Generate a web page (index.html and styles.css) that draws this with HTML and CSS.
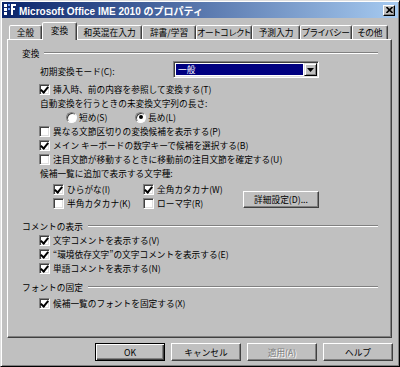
FILE: index.html
```html
<!DOCTYPE html>
<html lang="ja">
<head>
    <meta charset="UTF-8">
    <title>Microsoft Office IME 2010 のプロパティ</title>
    <link rel="stylesheet" href="styles.css">
</head>
<body>
<div class="window">
    <div class="titlebar">
        <svg class="app-icon" width="12" height="12" viewBox="0 0 12 12">
            <rect x="0" y="0" width="3" height="3" fill="#fff"/>
            <rect x="0" y="4" width="3" height="3" fill="#fff"/>
            <rect x="0" y="8" width="3" height="3" fill="#fff"/>
            <rect x="4" y="0" width="2" height="2" fill="#6fa0ff"/>
            <rect x="4" y="4" width="2" height="2" fill="#6fa0ff"/>
            <path d="M7 0 H12 V2 H9 V4 H11 V6 H9 V11 H7 Z" fill="#fff"/>
        </svg>
        <span class="title">Microsoft Office IME 2010 のプロパティ</span>
        <span class="close">
            <svg width="7" height="6" viewBox="0 0 7 6"><path d="M0.5 0 L6.5 6 M6.5 0 L0.5 6" stroke="#000" stroke-width="1.6"/></svg>
        </span>
    </div>

    <div class="tabs">
        <div class="tab tab-general">全般</div>
        <div class="tab tab-convert active">変換</div>
        <div class="tab tab-mixed">和英混在入力</div>
        <div class="tab tab-dict">辞書/学習</div>
        <div class="tab tab-auto">オートコレクト</div>
        <div class="tab tab-predict">予測入力</div>
        <div class="tab tab-privacy">プライバシー</div>
        <div class="tab tab-other">その他</div>
    </div>

    <div class="panel">
        <!-- 変換 -->
        <div class="group-head first">変換</div>
        <div class="group-body">
            <div class="select-row">
                <span class="select-label">初期変換モード(C):</span>
                <div class="select">
                    <span class="select-value">一般</span>
                    <span class="select-arrow">
                        <svg width="7" height="4" viewBox="0 0 7 4"><path d="M0 0 H7 L3.5 4 Z" fill="#000"/></svg>
                    </span>
                </div>
            </div>
            <label class="check"><span class="box checked"></span>挿入時、前の内容を参照して変換する(T)</label>
            <div class="text-row">自動変換を行うときの未変換文字列の長さ:</div>
            <div class="radios">
                <label class="radio short"><span class="dot"></span>短め(S)</label>
                <label class="radio"><span class="dot selected"></span>長め(L)</label>
            </div>
            <label class="check"><span class="box"></span>異なる文節区切りの変換候補を表示する(P)</label>
            <label class="check"><span class="box checked"></span>メイン キーボードの数字キーで候補を選択する(B)</label>
            <label class="check"><span class="box"></span>注目文節が移動するときに移動前の注目文節を確定する(U)</label>
            <div class="text-row">候補一覧に追加で表示する文字種:</div>
            <div class="extra">
                <div class="extra-grid">
                    <label class="check"><span class="box checked"></span>ひらがな(I)</label>
                    <label class="check"><span class="box checked"></span>全角カタカナ(W)</label>
                    <label class="check"><span class="box"></span>半角カタカナ(K)</label>
                    <label class="check"><span class="box"></span>ローマ字(R)</label>
                </div>
                <button class="btn btn-detail">詳細設定(D)...</button>
            </div>
        </div>

        <!-- コメントの表示 -->
        <div class="group-head comment">コメントの表示</div>
        <div class="group-body">
            <label class="check"><span class="box checked"></span>文字コメントを表示する(V)</label>
            <label class="check"><span class="box checked"></span>“環境依存文字”の文字コメントを表示する(E)</label>
            <label class="check"><span class="box checked"></span>単語コメントを表示する(N)</label>
        </div>

        <!-- フォントの固定 -->
        <div class="group-head font">フォントの固定</div>
        <div class="group-body font-body">
            <label class="check"><span class="box checked"></span>候補一覧のフォントを固定する(X)</label>
        </div>
    </div>

    <div class="buttons">
        <button class="btn default">OK</button>
        <button class="btn">キャンセル</button>
        <button class="btn disabled">適用(A)</button>
        <button class="btn">ヘルプ</button>
    </div>
</div>
</body>
</html>
```

FILE: styles.css
```css
:root {
    --face: #c0c0c0;
    --light: #ffffff;
    --shadow: #808080;
    --dark: #404040;
}

body {
    margin: 0;
    background: var(--face);
    font-family: "Noto Sans CJK JP", sans-serif;
    font-size: 8.7px;
    color: #000;
    overflow: hidden;
}

.window {
    width: 400px;
    height: 367px;
    box-sizing: border-box;
    background: var(--face);
    border: 1px solid;
    border-color: #dfdfdf #000 #000 #dfdfdf;
    box-shadow: inset 1px 1px var(--light), inset -1px -1px var(--shadow);
    padding: 1px;
    display: flex;
    flex-direction: column;
}

/* title bar */
.titlebar {
    height: 16px;
    display: flex;
    align-items: center;
    padding: 0 3px 0 2px;
    background: linear-gradient(to right, #0a246a, #a6caf0);
    color: #fff;
}

.app-icon {
    flex: none;
}

.title {
    margin-left: 3px;
    font-family: "Liberation Sans", "Noto Sans CJK JP", sans-serif;
    font-weight: bold;
    font-size: 10px;
    white-space: nowrap;
}

.close {
    margin-left: auto;
    width: 12px;
    height: 11px;
    box-sizing: border-box;
    background: var(--face);
    border: 1px solid;
    border-color: var(--light) #000 #000 var(--light);
    box-shadow: inset -1px -1px var(--shadow);
    display: flex;
    align-items: center;
    justify-content: center;
}

/* tabs */
.tabs {
    margin-top: 4px;
    height: 17px;
    padding-left: 7px;
    display: flex;
    align-items: flex-end;
    position: relative;
    z-index: 1;
}

.tab {
    height: 14px;
    box-sizing: border-box;
    border: 1px solid;
    border-bottom: none;
    border-color: var(--light) var(--dark) transparent var(--light);
    border-radius: 2px 2px 0 0;
    box-shadow: inset -1px 0 var(--shadow);
    display: flex;
    align-items: center;
    justify-content: center;
    white-space: nowrap;
    background: var(--face);
    font-feature-settings: "palt";
}

.tab.active {
    height: 18px;
    margin-bottom: -1px;
    padding-bottom: 2px;
}

.tab-general { width: 33px; }
.tab-convert { width: 35px; }
.tab-mixed { width: 65px; }
.tab-dict { width: 54px; }
.tab-auto { width: 56px; }
.tab-predict { width: 48px; }
.tab-privacy { width: 52px; }
.tab-other { width: 36px; }

/* panel */
.panel {
    margin-left: 5px;
    width: 385px;
    height: 299px;
    box-sizing: border-box;
    border: 1px solid;
    border-color: var(--light) var(--dark) var(--dark) var(--light);
    box-shadow: inset -1px -1px var(--shadow);
    padding: 0 13px 0 14px;
}

.group-head {
    height: 14px;
    display: flex;
    align-items: center;
    white-space: nowrap;
}

.group-head::after {
    content: "";
    flex: 1;
    margin-left: 5px;
    border-top: 1px solid var(--shadow);
    border-bottom: 1px solid var(--light);
}

.group-head.first { margin-top: 6px; }
.group-head.comment { margin-top: 9px; }
.group-head.font { margin-top: 5px; }

.group-body {
    padding-left: 17px;
}

.font-body {
    margin-top: 2px;
}

.select-row {
    height: 19px;
    margin-bottom: 3px;
    display: flex;
    align-items: center;
}

.select-label {
    width: 134px;
    padding-left: 1px;
    box-sizing: border-box;
    padding-top: 3px;
}

.select {
    width: 146px;
    height: 17px;
    box-sizing: border-box;
    border: 1px solid;
    border-color: var(--shadow) var(--light) var(--light) var(--shadow);
    box-shadow: inset 1px 1px var(--dark), inset -1px -1px #dfdfdf;
    background: #fff;
    padding: 2px;
    display: flex;
}

.select-value {
    flex: 1;
    background: #000080;
    color: #fff;
    padding-left: 2px;
    margin-right: 1px;
    line-height: 11px;
}

.select-arrow {
    width: 13px;
    margin: -1px -1px -1px 0;
    box-sizing: border-box;
    background: var(--face);
    border: 1px solid;
    border-color: #dfdfdf #000 #000 #dfdfdf;
    box-shadow: inset 1px 1px var(--light), inset -1px -1px var(--shadow);
    display: flex;
    align-items: center;
    justify-content: center;
}

.check {
    height: 14px;
    display: flex;
    align-items: center;
    white-space: nowrap;
}

.box {
    flex: none;
    width: 11px;
    height: 11px;
    margin-right: 3px;
    box-sizing: border-box;
    background: #fff;
    border: 1px solid;
    border-color: var(--shadow) var(--light) var(--light) var(--shadow);
    box-shadow: inset 1px 1px var(--dark), inset -1px -1px #dfdfdf;
    position: relative;
}

.box.checked::after {
    content: "";
    position: absolute;
    left: 2px;
    top: 0;
    width: 3px;
    height: 6px;
    border: solid #000;
    border-width: 0 2px 2px 0;
    transform: rotate(40deg);
}

.text-row {
    height: 14px;
    display: flex;
    align-items: center;
    padding-left: 1px;
    white-space: nowrap;
}

.radios {
    height: 14px;
    display: flex;
    align-items: center;
    padding-left: 27px;
}

.radio {
    display: flex;
    align-items: center;
    white-space: nowrap;
}

.radio.short {
    width: 69px;
}

.dot {
    width: 11px;
    height: 11px;
    margin-right: 2px;
    box-sizing: border-box;
    border-radius: 50%;
    background: #fff;
    border: 1px solid;
    border-color: var(--shadow) var(--light) var(--light) var(--shadow);
    box-shadow: inset 1px 1px var(--dark);
    display: flex;
    align-items: center;
    justify-content: center;
}

.dot.selected::after {
    content: "";
    width: 4px;
    height: 4px;
    border-radius: 50%;
    background: #000;
}

.extra {
    margin-top: 2px;
    display: flex;
    padding-left: 14px;
}

.extra-grid {
    width: 190px;
    display: grid;
    grid-template-columns: 90px auto;
}

.btn {
    width: 70px;
    height: 18px;
    padding: 0;
    box-sizing: border-box;
    background: var(--face);
    font: inherit;
    color: #000;
    border: 1px solid;
    border-color: var(--light) var(--dark) var(--dark) var(--light);
    box-shadow: inset -1px -1px var(--shadow);
    display: flex;
    align-items: center;
    justify-content: center;
}

.btn-detail {
    width: 76px;
    height: 17px;
    align-self: flex-end;
    margin-bottom: 2px;
}

.btn.default {
    border-color: #000;
    box-shadow: inset 1px 1px var(--light), inset -1px -1px var(--dark), inset -2px -2px var(--shadow);
}

.btn.disabled {
    color: var(--shadow);
    text-shadow: 1px 1px var(--light);
}

/* bottom buttons */
.buttons {
    margin-top: 5px;
    padding-right: 5px;
    display: flex;
    justify-content: flex-end;
    gap: 6px;
}
```
